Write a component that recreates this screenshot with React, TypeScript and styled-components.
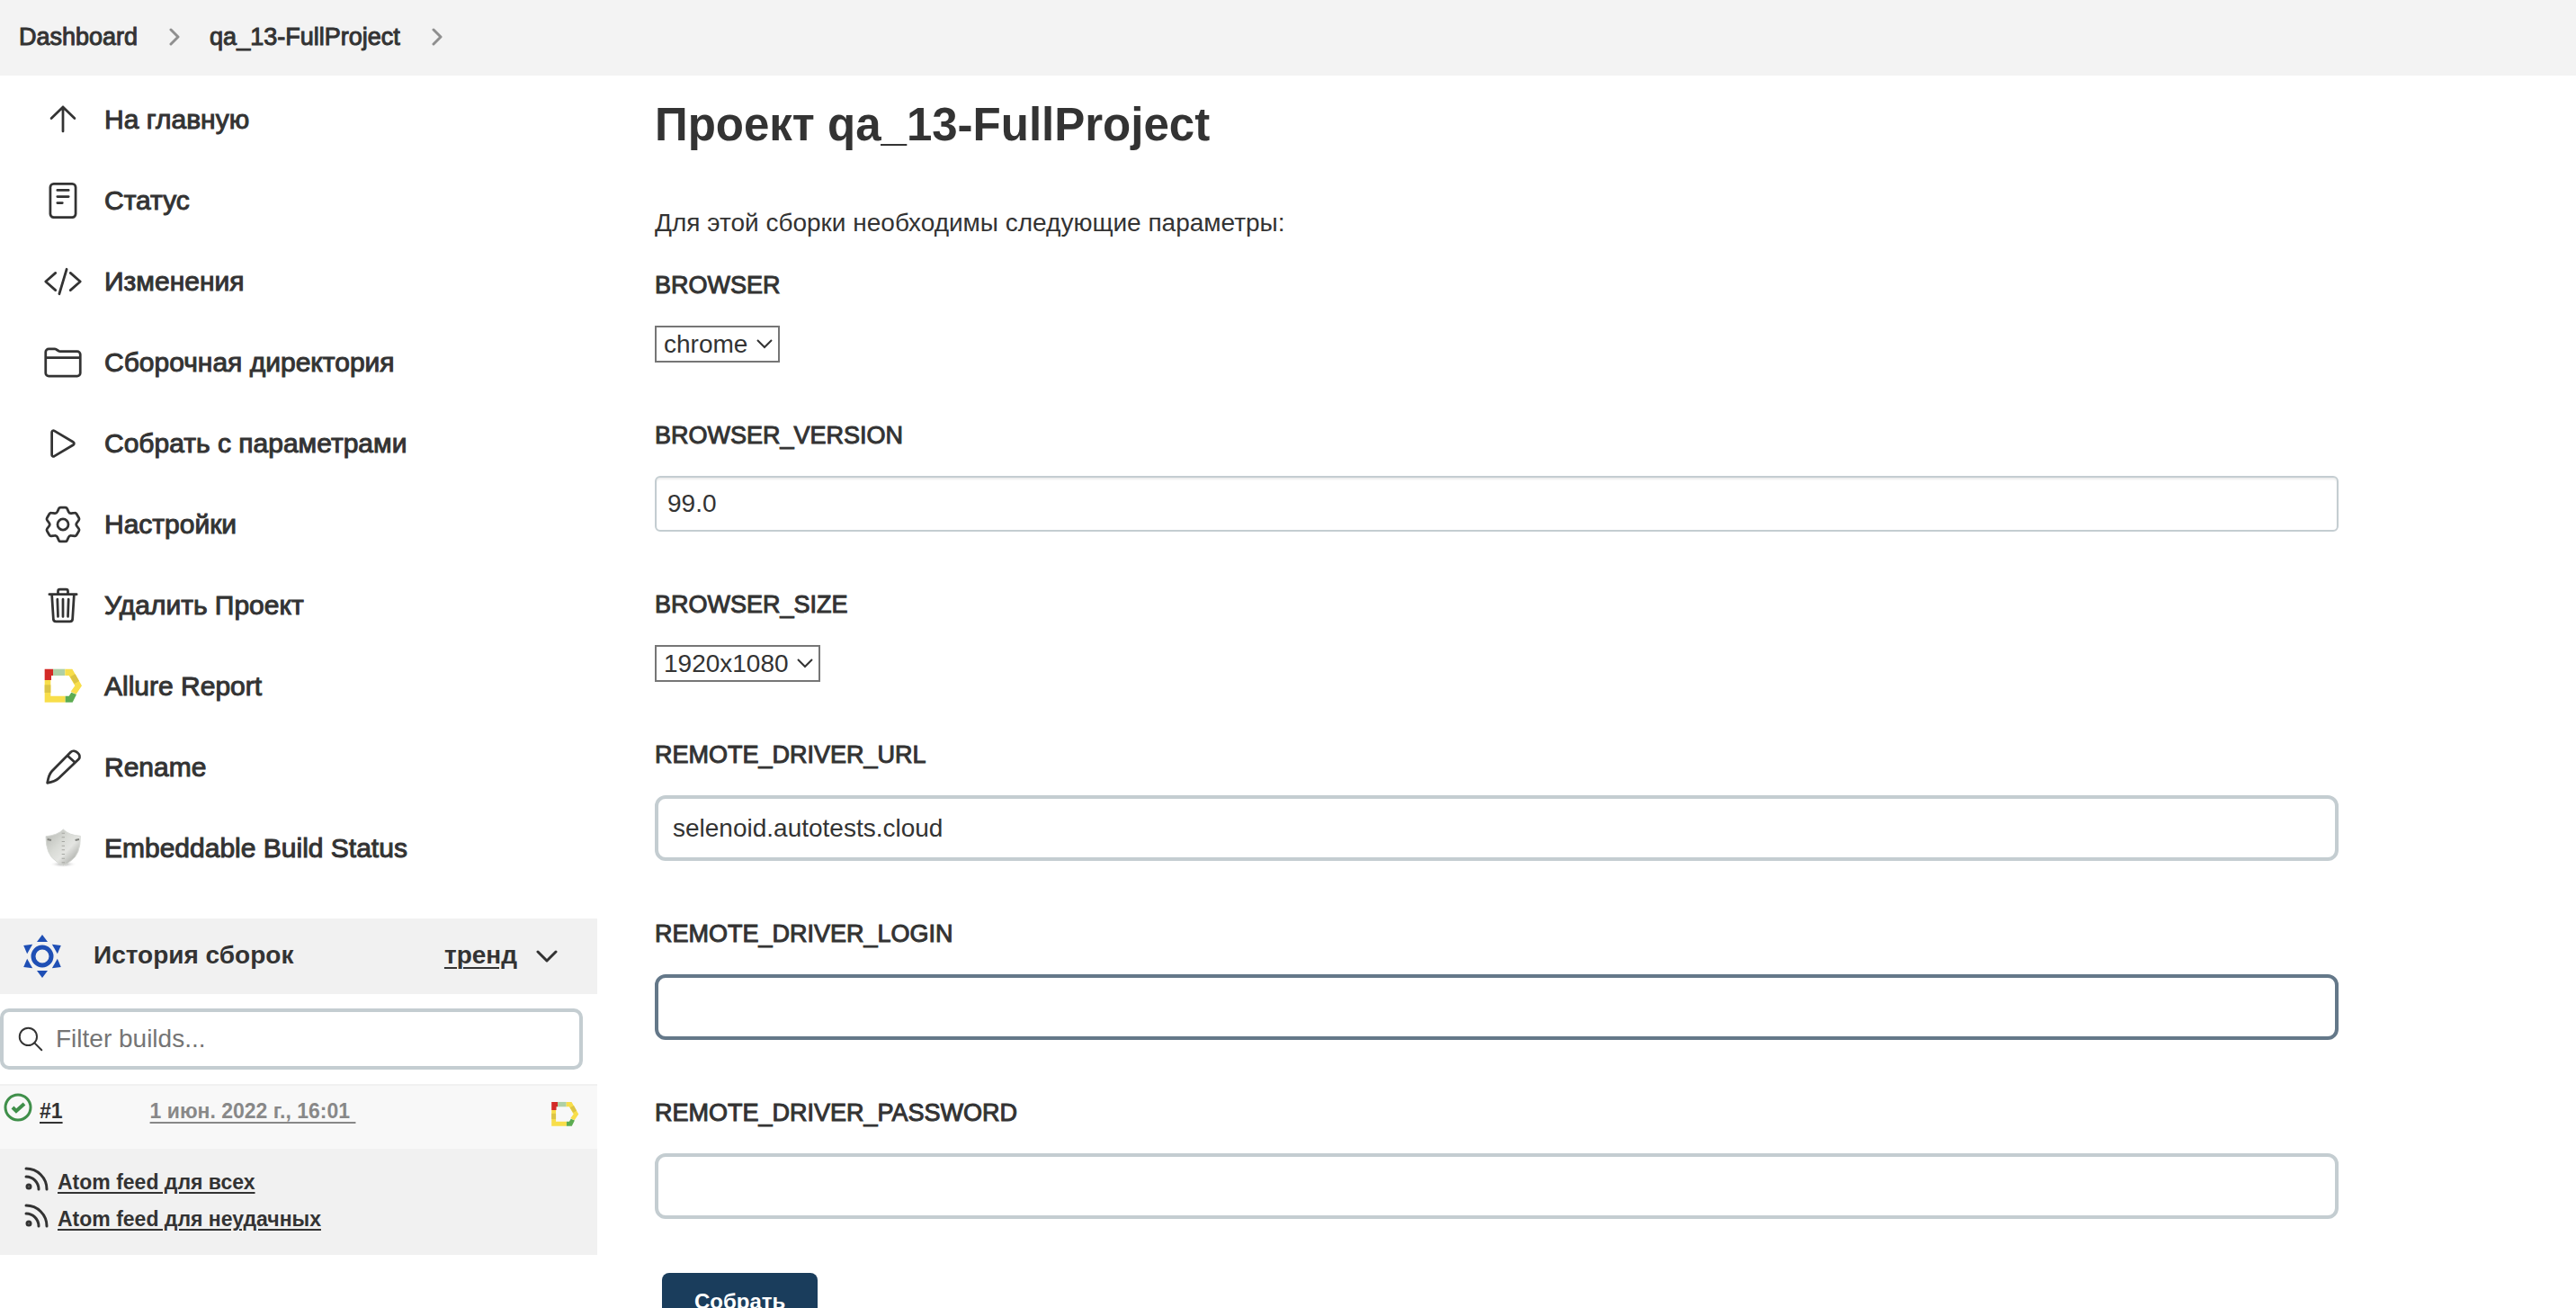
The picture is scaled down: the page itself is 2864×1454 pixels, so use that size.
import React from "react";
import styled, { createGlobalStyle } from "styled-components";

const ink = "#333333";
const line = "#c4cdd1";

const GlobalStyle = createGlobalStyle`
  *, *::before, *::after { box-sizing: border-box; }
  html { scrollbar-width: none; }
  body {
    margin: 0;
    background: #ffffff;
    color: ${ink};
    font-family: "Liberation Sans", Arial, Helvetica, sans-serif;
    font-size: 28px;
    line-height: 34px;
  }
  input, select, button { font: inherit; color: inherit; margin: 0; }
  a { color: inherit; }
`;

const Breadcrumbs = styled.nav`
  background: #f3f3f3;
  ol {
    display: flex;
    align-items: center;
    gap: 33px;
    min-height: 84px;
    margin: 0;
    padding: 0 21px 3px;
    list-style: none;
    font-size: 27px;
  }
  li { display: flex; align-items: center; gap: 35px; }
  a { text-decoration: none; -webkit-text-stroke: 1px ${ink}; }
  svg { width: 12px; height: 20px; color: #8f8f8f; }
`;

const Layout = styled.div`
  display: flex;
  align-items: flex-start;
`;

const Sidebar = styled.aside`
  flex: 0 0 664px;
  padding-top: 4px;
`;

const Tasks = styled.nav`
  display: flex;
  flex-direction: column;
  margin-bottom: 33px;
`;

const Task = styled.a`
  display: flex;
  align-items: center;
  gap: 24px;
  height: 90px;
  padding-left: 48px;
  font-size: 30px;
  text-decoration: none;
  -webkit-text-stroke: 1px ${ink};
  svg { flex: none; width: 44px; height: 44px; }
`;

const HistoryHead = styled.div`
  display: flex;
  align-items: center;
  height: 84px;
  padding: 0 44px 0 23px;
  background: #f1f1f1;
  font-weight: bold;
  h2, a { padding-bottom: 3px; }
  h2 { flex: 1; margin: 0 0 0 33px; font: inherit; }
  a { margin-right: 21px; text-underline-offset: 4px; text-decoration-thickness: 2px; }
`;

const Filter = styled.label`
  display: flex;
  align-items: center;
  gap: 14px;
  height: 68px;
  margin: 16px 16px 16px 0;
  padding: 0 16px;
  border: 4px solid ${line};
  border-radius: 10px;
  svg { flex: none; width: 28px; height: 28px; }
  input {
    flex: 1;
    min-width: 0;
    padding: 0;
    border: 0;
    outline: 0;
    background: none;
  }
  input::placeholder { color: #757575; opacity: 1; }
`;

const Build = styled.div`
  display: flex;
  align-items: flex-start;
  height: 72px;
  padding: 8px 20px 0 4px;
  border-top: 2px solid #f1f1f1;
  background: #f8f8f8;
  font-size: 23px;
  font-weight: bold;
`;

const BuildLink = styled.a<{ $muted?: boolean }>`
  margin-left: ${(p) => (p.$muted ? 97 : 8)}px;
  margin-right: ${(p) => (p.$muted ? "auto" : 0)};
  padding-top: 3px;
  color: ${(p) => (p.$muted ? "#888888" : ink)};
  white-space: pre;
  text-underline-offset: 4px;
  text-decoration-thickness: 2px;
`;

const Badge = styled.span`
  display: flex;
  padding-top: 8px;
  svg { width: 32px; height: 32px; }
`;

const Feeds = styled.div`
  display: flex;
  flex-direction: column;
  gap: 7px;
  height: 118px;
  padding: 19px 26px;
  background: #f1f1f1;
  font-size: 23px;
  font-weight: bold;
`;

const Feed = styled.a`
  display: flex;
  align-items: flex-start;
  gap: 9px;
  text-decoration: none;
  svg { flex: none; width: 29px; height: 29px; }
  span {
    padding-top: 3px;
    line-height: 31px;
    text-decoration: underline;
    text-underline-offset: 3px;
    text-decoration-thickness: 2px;
  }
`;

const Main = styled.main`
  flex: 1;
  min-width: 0;
  padding: 25px 264px 40px 64px;
  h1 { margin: 0 0 62px; font-size: 51px; line-height: 60px; }
  p { margin: 0 0 35px; }
`;

const Field = styled.div`
  display: flex;
  flex-direction: column;
  align-items: flex-start;
  gap: 28px;
  margin-bottom: 64px;
  label { font-size: 27px; -webkit-text-stroke: 1px ${ink}; }
`;

const TextInput = styled.input<{ $thin?: boolean; $active?: boolean }>`
  width: 100%;
  height: ${(p) => (p.$thin ? 62 : 73)}px;
  padding: 0 ${(p) => (p.$thin ? 12 : 16)}px;
  border: ${(p) => (p.$thin ? 2 : 4)}px solid ${(p) => (p.$active ? "#647889" : line)};
  border-radius: ${(p) => (p.$thin ? 6 : 12)}px;
  outline: 0;
  background: #ffffff;
  box-shadow: ${(p) => (p.$thin ? "inset 0 2px 2px rgba(0, 0, 0, 0.08)" : "none")};
`;

const SelectBox = styled.div`
  position: relative;
  display: inline-flex;
  select {
    appearance: none;
    height: 41px;
    padding: 0 33px 0 8px;
    border: 2px solid #767676;
    border-radius: 0;
    outline: 0;
    background: #ffffff;
  }
  svg {
    position: absolute;
    right: 8px;
    top: 14px;
    width: 18px;
    height: 12px;
    pointer-events: none;
  }
`;

const Submit = styled.button`
  display: block;
  height: 64px;
  margin: -4px 8px 0;
  padding: 0 36px;
  border: 0;
  border-radius: 8px;
  background: #1a3d5c;
  color: #ffffff;
  font-size: 24px;
  font-weight: bold;
`;

const Outline = ({ children, width = 32 }: { children: React.ReactNode; width?: number }) => (
  <svg viewBox="0 0 512 512" fill="none" stroke="currentColor" strokeWidth={width} strokeLinecap="round" strokeLinejoin="round" aria-hidden="true">
    {children}
  </svg>
);

const Crumb = () => (
  <svg viewBox="0 0 12 20" fill="none" stroke="currentColor" strokeWidth="3" strokeLinecap="round" strokeLinejoin="round" aria-hidden="true">
    <path d="M2 2l8 8-8 8" />
  </svg>
);

const Allure = () => (
  <svg viewBox="0 0 132 132" aria-hidden="true">
    <path d="M5 45h20v53h49v21H5z" fill="#f8de4a" />
    <path d="M5 61h20v26H5z" fill="#dcc445" />
    <path d="M5 8h28v22h-6v15H5z" fill="#d32b27" />
    <path d="M33 8h40v22H33z" fill="#afd0a6" />
    <path d="M73 8h24l32 56-19 28-18-9 14-19-20-34H73z" fill="#f8de4a" />
    <path d="M107 25l13 23-16 9-14-23z" fill="#dcc445" />
    <path d="M94 86l17 7-13 26H74V98h12z" fill="#5cac51" />
  </svg>
);

const Shield = () => (
  <svg viewBox="0 0 132 132" aria-hidden="true">
    <defs>
      <linearGradient id="shieldFace" x1="0" x2="1" y1="0" y2="1">
        <stop offset="0" stopColor="#b4b6b1" />
        <stop offset="0.4" stopColor="#d9dbd6" />
        <stop offset="0.6" stopColor="#e4e5e2" />
        <stop offset="1" stopColor="#8f918c" />
      </linearGradient>
      <radialGradient id="shieldShadow">
        <stop offset="0" stopColor="#9a9a9a" />
        <stop offset="1" stopColor="#ffffff" stopOpacity="0" />
      </radialGradient>
    </defs>
    <ellipse cx="67" cy="119" rx="46" ry="11" fill="url(#shieldShadow)" />
    <path d="M67 3q20 20 57 22 1 62-32 83-12 11-25 15-13-4-25-15Q9 87 9 26q38-3 58-23z" fill="url(#shieldFace)" stroke="#d8dad6" strokeWidth="3" />
    <path d="M67 14v104" stroke="#a6a8a3" strokeWidth="10" strokeDasharray="3 11" />
    <path d="M14 36l13 3M120 36l-13 3" stroke="#80827d" strokeWidth="6" />
  </svg>
);

const spin = (x: number, y: number, deg: number) => {
  const a = (deg * Math.PI) / 180;
  return `${Math.round(256 + x * Math.cos(a) - y * Math.sin(a))} ${Math.round(256 + x * Math.sin(a) + y * Math.cos(a))}`;
};

// One tooth and the valley after it, repeated six times round the hub.
const gearPath =
  [0, 60, 120, 180, 240, 300]
    .map((d) => {
      const p = (x: number, y: number) => spin(x, y, d);
      return `${d ? "L" : "M"}${p(-72, -165)}L${p(-54, -205)}Q${p(-47, -221)} ${p(-30, -221)}L${p(30, -221)}Q${p(47, -221)} ${p(54, -205)}L${p(72, -165)}Q${p(82, -142)} ${spin(-72, -165, d + 60)}`;
    })
    .join("") + "z";

const tasks: { text: string; icon: React.ReactNode }[] = [
  { text: "На главную", icon: <Outline><path d="M106 238l150-146 150 146M256 92v314" /></Outline> },
  {
    text: "Статус",
    icon: (
      <Outline>
        <rect x="92" y="39" width="328" height="434" rx="44" />
        <path d="M184 122h144M184 205h144M184 286h64" />
      </Outline>
    ),
  },
  { text: "Изменения", icon: <Outline><path d="M160 368L32 256l128-112M352 368l128-112-128-112M304 96l-96 320" /></Outline> },
  {
    text: "Сборочная директория",
    icon: (
      <Outline>
        <path d="M440 432H72a40 40 0 01-40-40V120a40 40 0 0140-40h76a40 40 0 0122 7l28 18a40 40 0 0022 7h220a40 40 0 0140 40v240a40 40 0 01-40 40zM32 192h448" />
      </Outline>
    ),
  },
  {
    text: "Собрать с параметрами",
    icon: <Outline><path d="M112 111v290c0 17 17 29 31 20l248-148c12-7 12-26 0-34L143 91c-14-8-31 3-31 20z" /></Outline>,
  },
  {
    text: "Настройки",
    icon: (
      <Outline>
        <circle cx="256" cy="256" r="70" />
        <path d={gearPath} />
      </Outline>
    ),
  },
  {
    text: "Удалить Проект",
    icon: (
      <Outline>
        <path d="M112 112l20 320c1 18 14 32 32 32h184c18 0 31-14 32-32l20-320M80 112h352M192 112V72a24 24 0 0124-24h80a24 24 0 0124 24v40M256 176v224M184 176l8 224M328 176l-8 224" />
      </Outline>
    ),
  },
  { text: "Allure Report", icon: <Allure /> },
  {
    text: "Rename",
    icon: <Outline><path d="M54 457Q72 350 113 306L357 58C405 10 510 100 458 151L202 396Q156 440 54 457zM314 105l97 88" /></Outline>,
  },
  { text: "Embeddable Build Status", icon: <Shield /> },
];

const Sun = () => (
  <svg width="48" height="52" viewBox="0 0 48 52" fill="#1f4fb5" aria-hidden="true">
    <circle cx="24" cy="26" r="10" fill="none" stroke="#1f4fb5" strokeWidth="5" />
    {[0, 60, 120, 180, 240, 300].map((a) => (
      <path key={a} d="M24 2l6 8H18z" transform={`rotate(${a} 24 26)`} />
    ))}
  </svg>
);

const FeedIcon = () => (
  <svg viewBox="0 0 29 29" fill="none" stroke="currentColor" strokeWidth="3" strokeLinecap="round" aria-hidden="true">
    <circle cx="6" cy="23" r="2" />
    <path d="M3 3a23 23 0 0123 23M3 12a14 14 0 0114 14" />
  </svg>
);

function Choice({ id, value }: { id: string; value: string }) {
  return (
    <Field>
      <label htmlFor={id}>{id}</label>
      <SelectBox>
        <select id={id} defaultValue={value}>
          <option>{value}</option>
        </select>
        <svg viewBox="0 0 18 12" fill="none" stroke="currentColor" strokeWidth="2" aria-hidden="true">
          <path d="M1 2l8 8 8-8" />
        </svg>
      </SelectBox>
    </Field>
  );
}

function Entry({ id, value = "", type = "text", thin, active }: { id: string; value?: string; type?: string; thin?: boolean; active?: boolean }) {
  return (
    <Field>
      <label htmlFor={id}>{id}</label>
      <TextInput id={id} type={type} defaultValue={value} $thin={thin} $active={active} />
    </Field>
  );
}

export default function App() {
  return (
    <>
      <GlobalStyle />
      <Breadcrumbs>
        <ol>
          <li><a href="#dashboard">Dashboard</a><Crumb /></li>
          <li><a href="#project">qa_13-FullProject</a><Crumb /></li>
        </ol>
      </Breadcrumbs>
      <Layout>
        <Sidebar>
          <Tasks>
            {tasks.map((t) => (
              <Task key={t.text} href="#task">{t.icon}<span>{t.text}</span></Task>
            ))}
          </Tasks>
          <HistoryHead>
            <Sun />
            <h2>История сборок</h2>
            <a href="#trend">тренд</a>
            <svg width="24" height="16" viewBox="0 0 24 16" fill="none" stroke="currentColor" strokeWidth="3" strokeLinecap="round" strokeLinejoin="round" aria-hidden="true">
              <path d="M2 3l10 10L22 3" />
            </svg>
          </HistoryHead>
          <Filter>
            <Outline width={36}>
              <circle cx="208" cy="208" r="176" />
              <path d="M336 336l144 144" />
            </Outline>
            <input type="text" placeholder="Filter builds..." aria-label="Filter builds" />
          </Filter>
          <Build>
            <svg width="32" height="32" viewBox="0 0 32 32" fill="none" stroke="#3f8f4a" strokeWidth="3" aria-hidden="true">
              <circle cx="16" cy="16" r="14" />
              <path d="M10 16l4 4 9-8" strokeWidth="4" />
            </svg>
            <BuildLink href="#build">#1</BuildLink>
            <BuildLink href="#build" $muted>{"1 июн. 2022 г., 16:01 "}</BuildLink>
            <Badge><Allure /></Badge>
          </Build>
          <Feeds>
            <Feed href="#all"><FeedIcon /><span>Atom feed для всех</span></Feed>
            <Feed href="#failed"><FeedIcon /><span>Atom feed для неудачных</span></Feed>
          </Feeds>
        </Sidebar>
        <Main>
          <h1>Проект qa_13-FullProject</h1>
          <p>Для этой сборки необходимы следующие параметры:</p>
          <form onSubmit={(e) => e.preventDefault()}>
            <Choice id="BROWSER" value="chrome" />
            <Entry id="BROWSER_VERSION" value="99.0" thin />
            <Choice id="BROWSER_SIZE" value="1920x1080" />
            <Entry id="REMOTE_DRIVER_URL" value="selenoid.autotests.cloud" />
            <Entry id="REMOTE_DRIVER_LOGIN" active />
            <Entry id="REMOTE_DRIVER_PASSWORD" type="password" />
            <Submit type="submit">Собрать</Submit>
          </form>
        </Main>
      </Layout>
    </>
  );
}
